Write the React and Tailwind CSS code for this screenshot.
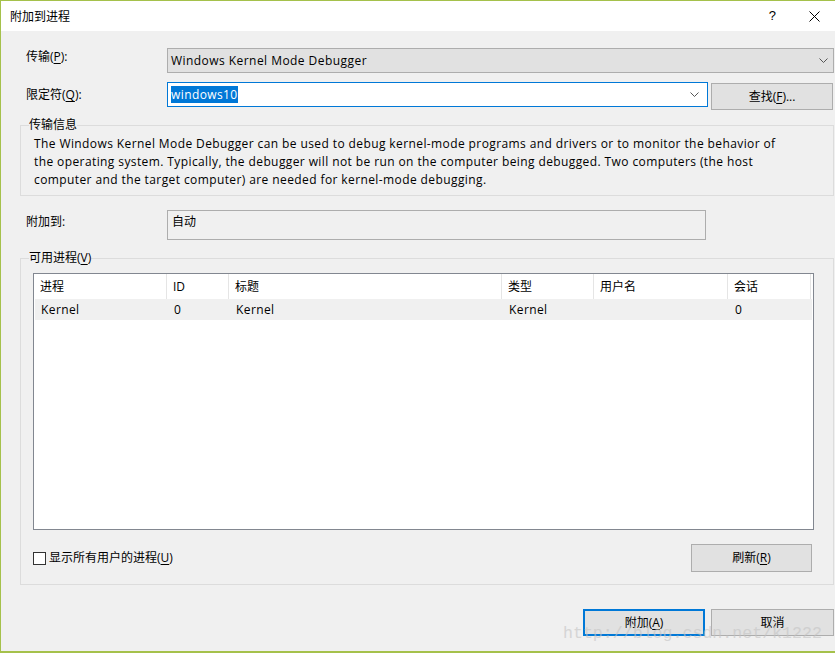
import React from "react";

const Chevron = ({ className = "" }) => (
  <svg width="9" height="6" viewBox="0 0 9 6" className={className}>
    <polyline points="0.5,0.5 4.5,4.5 8.5,0.5" fill="none" stroke="#555" strokeWidth="1" />
  </svg>
);

const Mn = ({ children }) => <span className="underline underline-offset-2">{children}</span>;

export default function App() {
  const cols = [
    { w: "w-[133px]", t: "进程", v: "Kernel" },
    { w: "w-[62px]", t: "ID", v: "0" },
    { w: "w-[273px]", t: "标题", v: "Kernel" },
    { w: "w-[92px]", t: "类型", v: "Kernel" },
    { w: "w-[134px]", t: "用户名", v: "" },
    { w: "w-[83px]", t: "会话", v: "0" },
  ];
  return (
    <div className="relative w-[835px] h-[653px] bg-[#f0f0f0] border-l border-t border-b-2 border-[#a5c14b] font-['Open_Sans','Noto_Sans_CJK_SC',sans-serif] text-[12px] text-black overflow-hidden flex flex-col">
      {/* title bar */}
      <div className="h-[30px] bg-white flex items-center shrink-0">
        <div className="pl-[9px] font-['Noto_Sans_CJK_SC',sans-serif] text-[12px] leading-[16px]">附加到进程</div>
        <div className="ml-auto flex items-center">
          <span className="text-[13px] mr-[33px] font-['Liberation_Sans',sans-serif]">?</span>
          <svg width="11" height="11" viewBox="0 0 11 11" className="mr-[15px]">
            <path d="M0.5 0.5 L10.5 10.5 M10.5 0.5 L0.5 10.5" stroke="#000" strokeWidth="1" />
          </svg>
        </div>
      </div>

      <div className="flex flex-col pl-[19px] pr-[1px]">
        {/* transport */}
        <div className="flex items-start mt-[17px]">
          <div className="w-[147px] pl-[6px] pt-[1px] leading-[16px]">传输(<Mn>P</Mn>):</div>
          <div className="w-[667px] h-[25px] border border-[#adadad] bg-[#e1e1e1] flex items-center pl-[3px] pr-[5px]">
            <span className="leading-[16px] tracking-[0.45px]">Windows Kernel Mode Debugger</span>
            <Chevron className="ml-auto" />
          </div>
        </div>

        {/* qualifier */}
        <div className="flex items-start mt-[9px]">
          <div className="w-[147px] pl-[6px] pt-[5px] leading-[16px]">限定符(<Mn>Q</Mn>):</div>
          <div className="w-[541px] h-[25px] border border-[#0078d7] bg-white flex items-center pl-[3px] pr-[8px]">
            <span className="bg-[#0078d7] text-white leading-[17px] tracking-[0.4px]">windows10</span>
            <Chevron className="ml-auto" />
          </div>
          <div className="ml-[3px] mt-[1px] w-[122px] h-[27px] border border-[#adadad] bg-[#e1e1e1] flex items-center justify-center leading-[16px]">
            查找(<Mn>F</Mn>)...
          </div>
        </div>

        {/* transport info group */}
        <div className="relative mt-[15px] h-[71px] border border-[#dcdcdc]">
          <div className="absolute left-[8px] top-[-9px] bg-[#f0f0f0] leading-[16px]">传输信息</div>
          <div className="pl-[13px] pt-[9px] leading-[18px] tracking-[0.4px] whitespace-nowrap">
            The Windows Kernel Mode Debugger can be used to debug kernel-mode programs and drivers or to monitor the behavior of
            <br />
            the operating system. Typically, the debugger will not be run on the computer being debugged. Two computers (the host
            <br />
            computer and the target computer) are needed for kernel-mode debugging.
          </div>
        </div>

        {/* attach to */}
        <div className="flex items-start mt-[14px]">
          <div className="w-[147px] pl-[6px] pt-[4px] leading-[16px]">附加到:</div>
          <div className="w-[539px] h-[30px] border border-[#adadad] pl-[4px] pt-[3px] leading-[16px]">自动</div>
        </div>

        {/* available processes group */}
        <div className="relative mt-[18px] h-[327px] border border-[#dcdcdc] flex flex-col">
          <div className="absolute left-[8px] top-[-9px] bg-[#f0f0f0] leading-[16px]">
            可用进程(<Mn>V</Mn>)
          </div>
          <div className="ml-[12px] mt-[14px] w-[781px] h-[257px] border border-[#828790] bg-white flex flex-col">
            <div className="flex h-[25px]">
              {cols.map((c, i) => (
                <div key={i} className={`${c.w} h-full border-r border-[#e5e5e5] flex items-center pl-[6px] leading-[16px]`}>
                  {c.t}
                </div>
              ))}
            </div>
            <div className="flex h-[21px] bg-[#f0f0f0] mx-[1px]">
              {cols.map((c, i) => (
                <div key={i} className={`${c.w} pl-[6px] h-full flex items-center leading-[16px] tracking-[0.4px]`}>
                  {c.v}
                </div>
              ))}
            </div>
          </div>
          <div className="ml-[12px] w-[779px] mt-[14px] flex items-center">
            <div className="w-[13px] h-[13px] border border-[#333] bg-white" />
            <span className="ml-[3px] leading-[16px]">显示所有用户的进程(<Mn>U</Mn>)</span>
            <div className="ml-auto w-[121px] h-[28px] border border-[#adadad] bg-[#e1e1e1] flex items-center justify-center leading-[16px]">
              刷新(<Mn>R</Mn>)
            </div>
          </div>
        </div>

        {/* bottom buttons */}
        <div className="flex justify-end mt-[24px]">
          <div className="w-[122px] h-[27px] border-2 border-[#0078d7] bg-[#e1e1e1] flex items-center justify-center leading-[16px]">
            附加(<Mn>A</Mn>)
          </div>
          <div className="ml-[6px] w-[123px] h-[27px] border border-[#adadad] bg-[#e1e1e1] flex items-center justify-center leading-[16px]">
            取消
          </div>
        </div>
      </div>

      {/* watermark */}
      <div className="absolute left-[562px] top-[621px] font-['Liberation_Mono',monospace] text-[16.6px] leading-[24px] text-[#c4c4c4] opacity-60 pointer-events-none whitespace-nowrap">
        http://blog.csdn.net/k1222
      </div>
    </div>
  );
}
